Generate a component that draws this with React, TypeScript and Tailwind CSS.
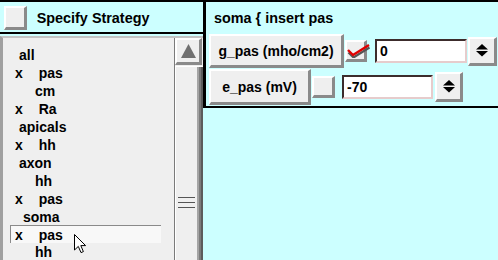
const raised =
  "bg-[#efefef] border-t-2 border-l-2 border-b-[3px] border-r-[3px] border-t-white border-l-white border-b-[#8a8a8a] border-r-[#8a8a8a]";
const sunken =
  "bg-white border-2 border-t-[#3c2c2c] border-l-[#3c2c2c] border-b-[#e6cccc] border-r-[#e6cccc]";

type Row = { x?: boolean; name: string; pad: string; selected?: boolean };

const rows: Row[] = [
  { name: "all", pad: "pl-[16px]" },
  { x: true, name: "pas", pad: "pl-[12px]" },
  { name: "cm", pad: "pl-[32px]" },
  { x: true, name: "Ra", pad: "pl-[12px]" },
  { name: "apicals", pad: "pl-[16px]" },
  { x: true, name: "hh", pad: "pl-[12px]" },
  { name: "axon", pad: "pl-[16px]" },
  { name: "hh", pad: "pl-[32px]" },
  { x: true, name: "pas", pad: "pl-[12px]" },
  { name: "soma", pad: "pl-[20px]" },
  { x: true, name: "pas", pad: "pl-[4px]", selected: true },
  { name: "hh", pad: "pl-[32px]" },
];

function Spinner({ size }: { size: string }) {
  return (
    <div className={`${raised} ${size} flex items-center justify-center`}>
      <svg width="12" height="13" viewBox="0 0 12 13">
        <polygon points="6,0 12,5.5 0,5.5" fill="#000" />
        <polygon points="0,7 12,7 6,12.5" fill="#000" />
      </svg>
    </div>
  );
}

function ListRow({ row }: { row: Row }) {
  const base = "h-[18px] leading-[18px] flex whitespace-pre";
  if (row.selected) {
    return (
      <div className={`${base} ml-[7px] w-[151px] border-t border-l border-[#8a8a8a] bg-[#f8f8f8] -mt-px ${row.pad}`}>
        <span className="w-[23.7px]">x</span>
        <span>{row.name}</span>
      </div>
    );
  }
  return (
    <div className={`${base} ${row.pad}`}>
      {row.x && <span className="w-[23.7px]">x</span>}
      <span>{row.name}</span>
    </div>
  );
}

export default function App() {
  return (
    <div className="w-[498px] h-[260px] bg-[#ccffff] flex overflow-hidden relative font-['Liberation_Sans',Arial,sans-serif] font-bold text-black">
      {/* left column */}
      <div className="w-[203px] h-full flex flex-col">
        <div className="h-[34px] border-t-2 border-b-2 border-black flex items-start">
          <div className={`${raised} mt-[4px] ml-[4px] w-[23px] h-[24px]`} />
          <div className="ml-[9.7px] mt-[8px] leading-[16px] text-[14.4px]">Specify Strategy</div>
        </div>
        <div className="mt-[2px] flex-1 flex border-t-2 border-t-[#c4c4c4] border-l-[3px] border-l-[#a0a0a0] bg-[#efefef] min-h-0">
          <div className="w-[171px] pt-[7.6px] text-[14px]">
            {rows.map((r, i) => (
              <ListRow key={i} row={r} />
            ))}
          </div>
          <div className="w-[29px] border-l border-l-[#7a7a7a] flex flex-col">
            <div className={`${raised} w-[27px] h-[27px] flex items-center justify-center`}>
              <svg width="15" height="14" viewBox="0 0 15 14">
                <polygon points="7.5,0 15,14 0,14" fill="#707070" />
              </svg>
            </div>
            <div className="mt-px flex-1 flex border-t border-t-white">
              <div className="flex-1 border-l border-l-white flex flex-col pt-[130px] px-[2px]">
                <div className="h-px bg-[#555]" />
                <div className="h-[4px] bg-[#efefef]" />
                <div className="h-px bg-[#555]" />
                <div className="h-[4px] bg-[#efefef]" />
                <div className="h-px bg-[#555]" />
              </div>
              <div className="w-[2px] bg-[#a4a4a4]" />
              <div className="w-[2px] bg-[#7c7c7c]" />
              <div className="w-[2px] bg-[#5c5c5c]" />
            </div>
          </div>
        </div>
      </div>

      {/* right panel */}
      <div className="w-[295px] h-[108px] border-t-2 border-l-[3px] border-b-2 border-black flex flex-col">
        <div className="h-[32px] pt-[8px] pl-[8px] leading-[16px] text-[14.4px]">soma {"{"} insert pas</div>

        <div className="h-[34px] flex items-center pl-[3px] text-[14px]">
          <div className={`${raised} w-[135px] h-[34px] flex items-center justify-center pt-px`}>g_pas (mho/cm2)</div>
          <div className={`${raised} ml-px w-[22px] h-[22px] flex items-center justify-center overflow-visible`}>
            <svg width="24" height="14" viewBox="0 0 24 14" className="ml-[6px] shrink-0">
              <path d="M1 7 L6 12 L22 2" stroke="#555" strokeWidth="2.2" fill="none" transform="translate(0.5,1.5)" />
              <path d="M1 6 L6 11 L22 1" stroke="#e00000" strokeWidth="2.4" fill="none" />
            </svg>
          </div>
          <div className={`${sunken} ml-[8px] w-[92px] h-[24px] flex items-center pl-[3px] pt-px`}>0</div>
          <div className="ml-px">
            <Spinner size="w-[29px] h-[29px]" />
          </div>
        </div>

        <div className="mt-px h-[36px] flex items-center pl-[3px] text-[14px]">
          <div className={`${raised} w-[102px] h-[36px] flex items-center justify-center pt-px`}>e_pas (mV)</div>
          <div className={`${raised} ml-px w-[23px] h-[22px]`} />
          <div className={`${sunken} ml-[7px] w-[91px] h-[24px] flex items-center pl-[3px] pt-px`}>-70</div>
          <div className="ml-[2px]">
            <Spinner size="w-[28px] h-[30px]" />
          </div>
        </div>
      </div>

      {/* mouse pointer */}
      <svg className="absolute left-[74px] top-[234px]" width="13" height="20" viewBox="0 0 13 20">
        <path d="M0.5 0.5 L0.5 16 L4.3 12.4 L7 18.6 L9.4 17.6 L6.8 11.6 L11.6 11.6 Z" fill="#fff" stroke="#000" strokeWidth="1" />
      </svg>
    </div>
  );
}
